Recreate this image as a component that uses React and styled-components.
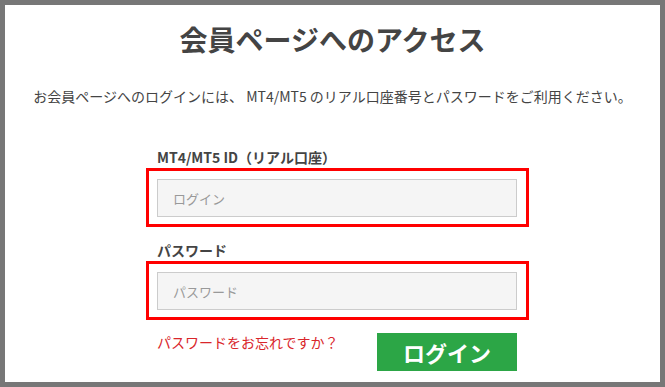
import React from 'react';
import styled, { createGlobalStyle } from 'styled-components';

const GlobalStyle = createGlobalStyle`
	html, body {
		margin: 0;
		padding: 0;
		background: #ffffff;
	}
	body {
		font-family: "Noto Sans CJK JP", "Noto Sans", sans-serif;
	}
`;

const App = () => {
	return (
		<>
			<GlobalStyle />
			<Frame>
				<Title>会員ページへのアクセス</Title>
				<Lead>
					お会員ページへのログインには、 MT4/MT5 のリアル口座番号とパスワードをご利用ください。
				</Lead>

				<Form onSubmit={(e) => e.preventDefault()}>
					<Label $first>MT4/MT5 ID（リアル口座）</Label>
					<Highlight>
						<Input type='text' placeholder='ログイン' />
					</Highlight>

					<Label>パスワード</Label>
					<Highlight>
						<Input type='password' placeholder='パスワード' />
					</Highlight>

					<Actions>
						<ForgotLink href='#'>パスワードをお忘れですか？</ForgotLink>
						<LoginButton type='submit'>ログイン</LoginButton>
					</Actions>
				</Form>
			</Frame>
		</>
	);
};

const Frame = styled.div`
	width: 665px;
	height: 387px;
	box-sizing: border-box;
	border: 5px solid #777777;
	padding-top: 14px;
	background: #ffffff;
	color: #444444;
	overflow: hidden;
`;

const Title = styled.h1`
	margin: 0;
	font-size: 28px;
	line-height: 40px;
	font-weight: 700;
	text-align: center;
	color: #444444;
`;

const Lead = styled.p`
	margin: 27px 0 0;
	font-size: 14px;
	line-height: 20px;
	text-align: center;
	color: #444444;
	white-space: nowrap;
`;

const Form = styled.form`
	width: 383px;
	margin: 0 0 0 141px;
	display: flex;
	flex-direction: column;
`;

const Label = styled.label`
	display: block;
	margin: ${(p) => (p.$first ? '41px' : '13px')} 0 1px 11px;
	font-size: 14px;
	line-height: 20px;
	font-weight: 700;
	color: #444444;
`;

const Highlight = styled.div`
	border: 3px solid #ff0000;
	padding: 8px 9px 7px 8px;
`;

const Input = styled.input`
	display: block;
	width: 360px;
	height: 38px;
	box-sizing: border-box;
	margin: 0;
	padding: 0 15px;
	background: #f5f5f5;
	border: 1px solid #cccccc;
	font-family: "Noto Sans CJK JP", "Noto Sans", sans-serif;
	font-size: 13px;
	color: #444444;
	outline: none;

	&::placeholder {
		color: #999999;
	}
`;

const Actions = styled.div`
	display: flex;
	justify-content: space-between;
	align-items: flex-start;
	margin-top: 13px;
	padding: 0 12px 0 11px;
`;

const ForgotLink = styled.a`
	margin-top: -1px;
	font-size: 14px;
	line-height: 20px;
	color: #d9262b;
	text-decoration: none;
`;

const LoginButton = styled.button`
	width: 140px;
	height: 38px;
	padding: 0;
	border: none;
	background: #2ca646;
	color: #ffffff;
	font-family: "Noto Sans CJK JP", "Noto Sans", sans-serif;
	font-size: 22px;
	font-weight: 700;
	line-height: 38px;
	cursor: pointer;
`;

export default App;
